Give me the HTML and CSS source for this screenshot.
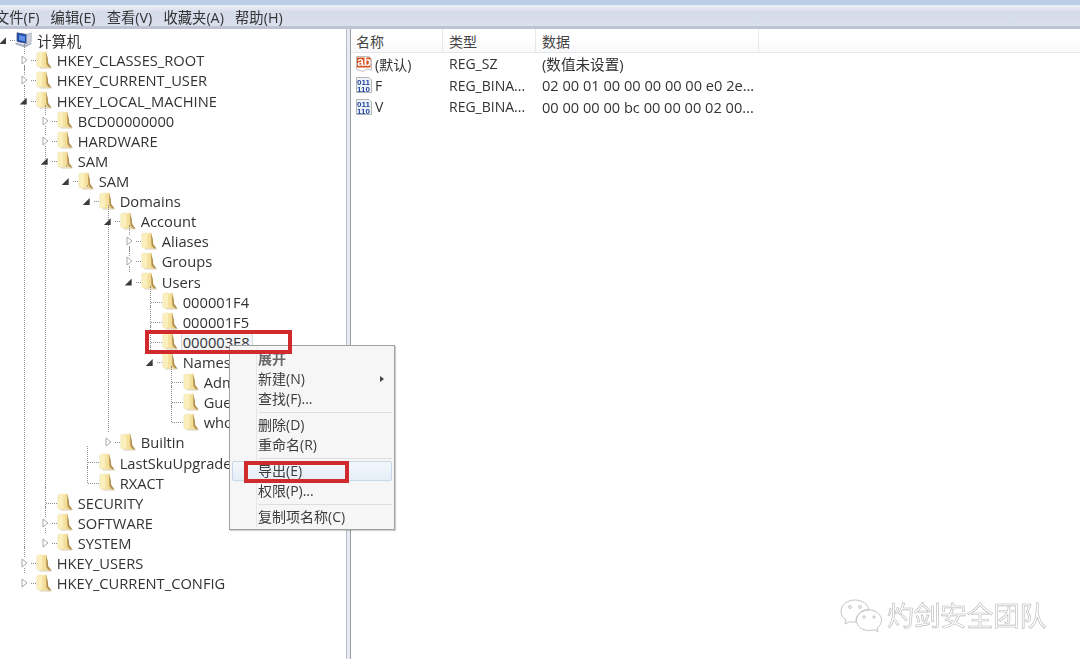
FILE: index.html
```html
<!DOCTYPE html>
<html lang="zh-CN">
<head>
<meta charset="utf-8">
<title>注册表编辑器</title>
<link rel="stylesheet" href="styles.css">
</head>
<body>
<svg class="defs" width="0" height="0" aria-hidden="true">
  <defs>
    <linearGradient id="fg" x1="0" y1="0" x2="1" y2="0">
      <stop offset="0" stop-color="#fbeeb4"/><stop offset=".6" stop-color="#f3dd98"/><stop offset="1" stop-color="#dcbc72"/>
    </linearGradient>
    <symbol id="folder" viewBox="0 0 16 18">
      <path d="M.8 2.500 Q.8 1.500 2 1.400 L6 .8 L7.500 2 L7.500 15.500 L2 15.800 Q.8 15.800 .8 14.800Z" fill="#fbf0bd" stroke="#e6d9a6" stroke-width=".4"/>
      <path d="M6 2 L9.500 .4 L10.500 1 L11 9 L11.500 13 L14 16.600 L3.500 16.600 L2 15.500 L6 15Z" fill="url(#fg)"/>
      <path d="M10 1 L11.800 7 L12.200 12 L15.600 16.800 L13.500 16.800 L10.500 13Z" fill="#b08e4c"/>
      <path d="M3 16.400 L15 16.400 L15.600 17.600 L4.500 17.600Z" fill="#d8ceb2"/>
    </symbol>
  </defs>
</svg>
<div class="window">
  <div class="titlebar"></div>
  <nav class="menubar">
    <span>文件(F)</span><span>编辑(E)</span><span>查看(V)</span><span>收藏夹(A)</span><span>帮助(H)</span>
  </nav>
  <main class="panes">
    <section class="tree-pane">
      <ul class="tree root">
        <li class="open last">
          <div class="row"><i class="exp"></i>
            <svg class="computer" viewBox="0 0 17 16"><path d="M2 .8 L11.500 2.500 L11.500 11.500 L2 9.500Z" fill="#1f47b0" stroke="#49597c" stroke-width=".8"/><path d="M4 3 L10 4.200 L10 9.500 L4 8Z" fill="#5f8fe0"/><path d="M11.500 2.500 L16.300 .8 L16.300 9.500 L11.500 11.500Z" fill="#cbd0da" stroke="#8d96a6" stroke-width=".5"/><path d="M.5 10.500 L10 13 L16.500 10.500 L16.500 12 L10 15.500 L.5 12.500Z" fill="#a7afc0"/></svg>
            <span class="label">计算机</span></div>
          <ul class="tree">
            <li class="closed"><div class="row"><i class="exp"></i><svg class="folder"><use href="#folder"/></svg><span class="label">HKEY_CLASSES_ROOT</span></div></li>
            <li class="closed"><div class="row"><i class="exp"></i><svg class="folder"><use href="#folder"/></svg><span class="label">HKEY_CURRENT_USER</span></div></li>
            <li class="open"><div class="row"><i class="exp"></i><svg class="folder"><use href="#folder"/></svg><span class="label">HKEY_LOCAL_MACHINE</span></div>
              <ul class="tree">
                <li class="closed"><div class="row"><i class="exp"></i><svg class="folder"><use href="#folder"/></svg><span class="label">BCD00000000</span></div></li>
                <li class="closed"><div class="row"><i class="exp"></i><svg class="folder"><use href="#folder"/></svg><span class="label">HARDWARE</span></div></li>
                <li class="open"><div class="row"><i class="exp"></i><svg class="folder"><use href="#folder"/></svg><span class="label">SAM</span></div>
                  <ul class="tree">
                    <li class="open last"><div class="row"><i class="exp"></i><svg class="folder"><use href="#folder"/></svg><span class="label">SAM</span></div>
                      <ul class="tree">
                        <li class="open last"><div class="row"><i class="exp"></i><svg class="folder"><use href="#folder"/></svg><span class="label">Domains</span></div>
                          <ul class="tree">
                            <li class="open"><div class="row"><i class="exp"></i><svg class="folder"><use href="#folder"/></svg><span class="label">Account</span></div>
                              <ul class="tree">
                                <li class="closed"><div class="row"><i class="exp"></i><svg class="folder"><use href="#folder"/></svg><span class="label">Aliases</span></div></li>
                                <li class="closed"><div class="row"><i class="exp"></i><svg class="folder"><use href="#folder"/></svg><span class="label">Groups</span></div></li>
                                <li class="open last"><div class="row"><i class="exp"></i><svg class="folder"><use href="#folder"/></svg><span class="label">Users</span></div>
                                  <ul class="tree">
                                    <li><div class="row"><i class="exp"></i><svg class="folder"><use href="#folder"/></svg><span class="label">000001F4</span></div></li>
                                    <li><div class="row"><i class="exp"></i><svg class="folder"><use href="#folder"/></svg><span class="label">000001F5</span></div></li>
                                    <li><div class="row"><i class="exp"></i><svg class="folder"><use href="#folder"/></svg><span class="label selected">000003E8</span></div></li>
                                    <li class="open last"><div class="row"><i class="exp"></i><svg class="folder"><use href="#folder"/></svg><span class="label">Names</span></div>
                                      <ul class="tree">
                                        <li><div class="row"><i class="exp"></i><svg class="folder"><use href="#folder"/></svg><span class="label">Adm</span></div></li>
                                        <li><div class="row"><i class="exp"></i><svg class="folder"><use href="#folder"/></svg><span class="label">Gue</span></div></li>
                                        <li class="last"><div class="row"><i class="exp"></i><svg class="folder"><use href="#folder"/></svg><span class="label">who</span></div></li>
                                      </ul>
                                    </li>
                                  </ul>
                                </li>
                              </ul>
                            </li>
                            <li class="closed last"><div class="row"><i class="exp"></i><svg class="folder"><use href="#folder"/></svg><span class="label">Builtin</span></div></li>
                          </ul>
                        </li>
                        <li><div class="row"><i class="exp"></i><svg class="folder"><use href="#folder"/></svg><span class="label">LastSkuUpgrade</span></div></li>
                        <li class="last"><div class="row"><i class="exp"></i><svg class="folder"><use href="#folder"/></svg><span class="label">RXACT</span></div></li>
                      </ul>
                    </li>
                  </ul>
                </li>
                <li><div class="row"><i class="exp"></i><svg class="folder"><use href="#folder"/></svg><span class="label">SECURITY</span></div></li>
                <li class="closed"><div class="row"><i class="exp"></i><svg class="folder"><use href="#folder"/></svg><span class="label">SOFTWARE</span></div></li>
                <li class="closed last"><div class="row"><i class="exp"></i><svg class="folder"><use href="#folder"/></svg><span class="label">SYSTEM</span></div></li>
              </ul>
            </li>
            <li class="closed"><div class="row"><i class="exp"></i><svg class="folder"><use href="#folder"/></svg><span class="label">HKEY_USERS</span></div></li>
            <li class="closed last"><div class="row"><i class="exp"></i><svg class="folder"><use href="#folder"/></svg><span class="label">HKEY_CURRENT_CONFIG</span></div></li>
          </ul>
        </li>
      </ul>
    </section>
    <div class="splitter"></div>
    <section class="list-pane">
      <div class="list-grid list-head">
        <span>名称</span><span>类型</span><span>数据</span><span></span>
      </div>
      <div class="list-grid list-row">
        <span class="name"><svg class="reg" viewBox="0 0 18 18"><path d="M1.500 1.500H14L16.500 4V15L12 14 8 16.500 1.500 14.500Z" fill="#fff" stroke="#bdbdbd"/><rect x="2" y="2.500" width="13.500" height="10" fill="#d8501f"/><text x="2.200" y="11.200" class="abtext">ab</text></svg>(默认)</span><span>REG_SZ</span><span class="data">(数值未设置)</span>
      </div>
      <div class="list-grid list-row">
        <span class="name"><svg class="reg" viewBox="0 0 18 18"><path d="M1.500 1.500H14L16.500 4V16.500H1.500Z" fill="#eef3fa" stroke="#b5b5b5"/><text x="2" y="8.500" class="bintext">011</text><text x="2" y="15.500" class="bintext">110</text></svg>F</span><span>REG_BINA...</span><span class="data">02 00 01 00 00 00 00 00 e0 2e...</span>
      </div>
      <div class="list-grid list-row">
        <span class="name"><svg class="reg" viewBox="0 0 18 18"><path d="M1.500 1.500H14L16.500 4V16.500H1.500Z" fill="#eef3fa" stroke="#b5b5b5"/><text x="2" y="8.500" class="bintext">011</text><text x="2" y="15.500" class="bintext">110</text></svg>V</span><span>REG_BINA...</span><span class="data">00 00 00 00 bc 00 00 00 02 00...</span>
      </div>
    </section>
  </main>

  <div class="context-menu">
    <div class="item bold">展开</div>
    <div class="item sub">新建(N)</div>
    <div class="item">查找(F)...</div>
    <div class="sep"></div>
    <div class="item">删除(D)</div>
    <div class="item">重命名(R)</div>
    <div class="sep"></div>
    <div class="item hover">导出(E)</div>
    <div class="item">权限(P)...</div>
    <div class="sep"></div>
    <div class="item">复制项名称(C)</div>
  </div>
  <div class="mark mark-key"></div>
  <div class="mark mark-export"></div>

  <div class="watermark">
    <svg class="wechat" viewBox="0 0 44 34" fill="#fff" stroke="#c4c4c8" stroke-width="1">
      <path d="M16 2C8 2 2 7 2 13.500C2 17 4 20 7 22L6 26 11 23.500C13 24 15 24.300 17 24.200C16 17 23 11 30 11.500C29 6 23 2 16 2Z"/>
      <path d="M30 12C23 12 17.500 16.500 17.500 22.300C17.500 28 23 32.500 30 32.500C32 32.500 33.500 32.200 35 31.700L39 33.500 38 30C41 28 42.500 25.300 42.500 22.300C42.500 16.500 37 12 30 12Z"/>
      <circle cx="11" cy="9" r="1.400"/><circle cx="21" cy="9" r="1.400"/><circle cx="25" cy="19" r="1.200"/><circle cx="35" cy="19" r="1.200"/>
    </svg>
    <span>灼剑安全团队</span>
  </div>
</div>
</body>
</html>
```

FILE: styles.css
```css
* { box-sizing: border-box; }
html, body { margin: 0; height: 100%; background: #fff; }
body {
  overflow: hidden;
  font-family: "Open Sans", "Noto Sans CJK SC", sans-serif;
  font-size: 14px;
  color: #333;
}
.defs { position: absolute; }
.window {
  position: relative;
  width: 1080px;
  height: 659px;
  display: flex;
  flex-direction: column;
  filter: blur(0.35px);
}
.titlebar {
  height: 6px;
  flex: none;
  background: linear-gradient(#bccde6 0 5px, #e6f0f6 5px);
}
.menubar {
  height: 23px;
  flex: none;
  display: flex;
  align-items: center;
  gap: 11.200px;
  margin-left: -5px;
  padding-top: 1px;
  border-bottom: 3px solid #bdc3d0;
  background: linear-gradient(#f0eef6 0, #d5dcea 30%, #dadfee 100%);
  font-size: 14.300px;
  color: #333;
}
.panes { flex: 1; display: flex; min-height: 0; }
.tree-pane { width: 346px; flex: none; padding-top: 1.200px; overflow: hidden; font-size: 14.700px; }
.splitter {
  width: 5px;
  flex: none;
  background: #e8ebf2;
  border-left: 1px solid #b9bcc4;
  border-right: 1px solid #9a9da5;
}
.list-pane { flex: 1; min-width: 0; }

/* tree */
.tree { list-style: none; margin: 0; padding: 0 0 0 21px; }
.tree.root { padding-left: 0; }
.tree.root > li > .tree { padding-left: 20.700px; }
.tree li { position: relative; }
.row {
  position: relative;
  height: 20.110px;
  display: flex;
  align-items: center;
  white-space: nowrap;
}
.exp { position: relative; width: 15px; flex: none; height: 100%; }
/* dotted connectors */
.tree .tree > li::before {
  content: "";
  position: absolute;
  left: 3px;
  top: -6px;
  bottom: 0;
  border-left: 1px dotted #8f8f8f;
}
.tree .tree > li.last::before { bottom: auto; height: 16px; }
.tree .tree > li.closed::before,
.tree .tree > li.open::before { clip-path: polygon(0 0, 100% 0, 100% 3px, 0 3px); }
.tree .tree > li.open:not(.last)::before,
.tree .tree > li.closed:not(.last)::before { clip-path: none; }
.row .exp::after {
  content: "";
  position: absolute;
  left: 4px;
  top: 10px;
  width: 11px;
  border-top: 1px dotted #8f8f8f;
}
.closed > .row .exp::after,
.open > .row .exp::after { left: 10px; width: 5px; }
/* expanders */
.closed > .row .exp::before,
.open > .row .exp::before {
  content: "";
  position: absolute;
  z-index: 1;
}
.closed > .row .exp::before {
  left: 0;
  top: 5px;
  width: 7px;
  height: 10px;
  background: #fff url("data:image/svg+xml,%3Csvg xmlns='http://www.w3.org/2000/svg' viewBox='0 0 7 10'%3E%3Cpath d='M1 1L6 5 1 9Z' fill='white' stroke='%23a8a8a8'/%3E%3C/svg%3E") no-repeat;
}
.open > .row .exp::before {
  left: -1px;
  top: 7px;
  width: 7px;
  height: 7px;
  background: #3c3c3c;
  clip-path: polygon(100% 0, 100% 100%, 0 100%);
}
.folder { width: 16px; height: 18px; flex: none; margin-top: -1px; }
.computer { width: 17px; height: 16px; flex: none; }
.label { margin-left: 4px; padding: 0 1px; position: relative; }
.label.selected { outline: 1px solid #d6d9e0; background: #f4f5f8; padding-right: 2px; }

/* list */
.list-grid { display: grid; grid-template-columns: 92px 93px 223px 1fr; }
.list-head {
  height: 24px;
  background: linear-gradient(#fff 0 50%, #f7f8f9);
  border-bottom: 1px solid #e4e6e9;
  color: #444;
  align-items: center;
}
.list-head span { height: 100%; display: flex; align-items: center; padding-left: 6px; border-right: 1px solid #e6e8ea; }
.list-head span:first-child { padding-left: 5px; }
.list-head span:last-child { border: 0; }
.list-row { height: 21.500px; align-items: center; white-space: nowrap; }
.list-row span { padding-left: 6px; }
.list-row .data { font-size: 14.600px; padding-left: 6px; }
.list-row .name { display: flex; align-items: center; padding-left: 4px; gap: 2px; }
.reg { width: 18px; height: 18px; flex: none; }
.abtext { font: bold 12px "Liberation Sans", sans-serif; fill: #fff; }
.bintext { font: bold 8px "Liberation Sans", sans-serif; fill: #24479f; }

/* context menu */
.context-menu {
  position: absolute;
  left: 229px;
  top: 345px;
  width: 166px;
  height: 185px;
  padding: 3px 2px;
  background: #f6f6f6;
  border: 1px solid #a0a0a0;
  box-shadow: 1px 1px 1px rgba(0,0,0,.18);
  color: #3c3c3c;
}
.context-menu::before {
  content: "";
  position: absolute;
  left: 26px;
  top: 2px;
  bottom: 2px;
  border-left: 1px solid #e6e6e6;
}
.item { position: relative; height: 20px; line-height: 20px; padding-left: 26px; white-space: nowrap; }
.item.bold { font-weight: 700; color: #6a6a6a; }
.item.sub::after {
  content: "";
  position: absolute;
  right: 8px;
  top: 7px;
  border-left: 4px solid #444;
  border-top: 3.500px solid transparent;
  border-bottom: 3.500px solid transparent;
}
.item.hover {
  background: linear-gradient(#f4f8fc, #e4edf7);
  outline: 1px solid #c8d8ea;
  outline-offset: -1px;
  border-radius: 2px;
}
.sep { height: 6px; margin: 0 0 0 27px; position: relative; }
.sep::after { content: ""; position: absolute; left: 0; right: 0; top: 3px; border-top: 1px solid #dedede; }

/* annotation frames */
.mark { position: absolute; border: 4.500px solid #d02a2c; }
.mark-key { left: 145px; top: 330px; width: 147px; height: 24px; }
.mark-export { left: 244px; top: 461px; width: 105px; height: 22px; }

/* watermark */
.watermark {
  position: absolute;
  left: 839px;
  top: 595px;
  display: flex;
  align-items: center;
  gap: 4px;
}
.wechat { width: 44px; height: 34px; }
.watermark span {
  font-size: 27px;
  letter-spacing: -.5px;
  color: #fff;
  -webkit-text-stroke: .6px #b8b8bc;
  font-family: "Noto Sans CJK SC", sans-serif;
}
```
